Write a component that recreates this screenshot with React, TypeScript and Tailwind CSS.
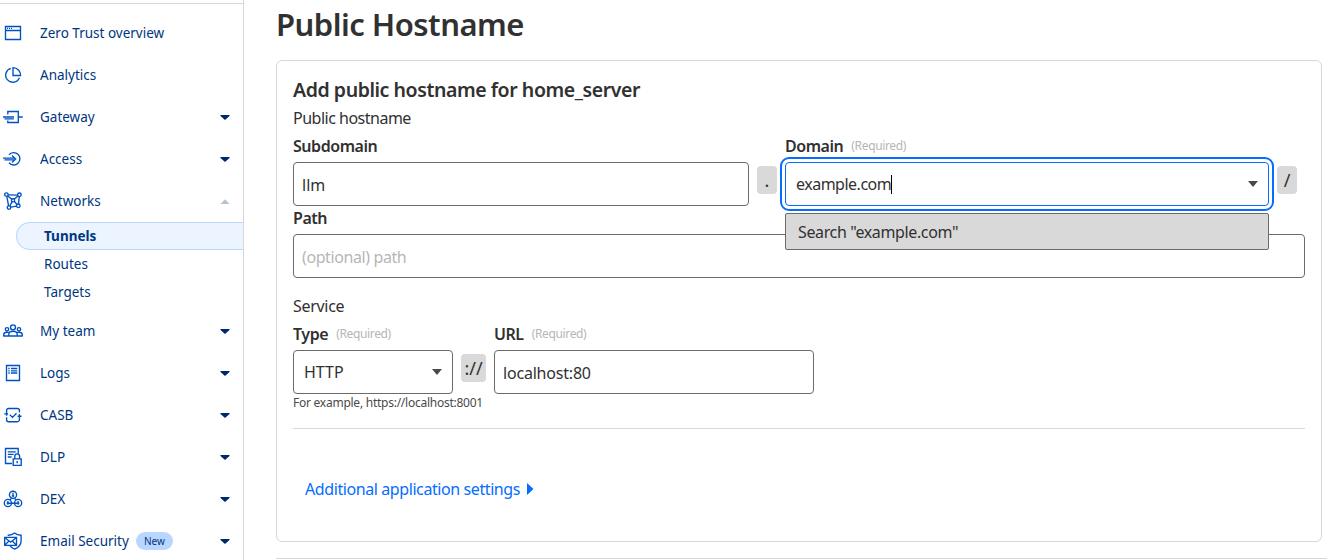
import type { ReactNode } from "react";

function Icon({ children }: { children: ReactNode }) {
  return (
    <svg className="h-5 w-5 shrink-0" viewBox="0 0 20 20" fill="none" stroke="#0051c3" strokeWidth="1.35">
      {children}
    </svg>
  );
}

const icons: Record<string, ReactNode> = {
  overview: (
    <Icon>
      <path d="M2.5 3.5h15v13h-15zM2.5 7.5h15" />
      <path d="M4 5.4h1M6 5.4h1M8 5.4h1" />
    </Icon>
  ),
  analytics: (
    <Icon>
      <path d="M7.8 3.3a7.1 7.1 0 1 0 8.6 9.4" />
      <path d="M10 2.6v7.9h7.6a7.6 7.6 0 0 0-7.6-7.9z" />
    </Icon>
  ),
  gateway: (
    <Icon>
      <path d="M4.8 7.4V4.5h10.5v11H4.8v-2M15.3 10h4.4M0 10h11M1.5 11.8h9.3" />
    </Icon>
  ),
  access: (
    <Icon>
      <path d="M6 5.8a6.2 6.2 0 1 1 0 8M0 9.1h12M1.5 10.9h10.2M9 6.6l3.6 3.4L9 13.4" />
    </Icon>
  ),
  networks: (
    <Icon>
      <circle cx="3.4" cy="3.6" r="1.8" />
      <circle cx="16.4" cy="3.8" r="1.8" />
      <circle cx="6" cy="16.6" r="1.8" />
      <circle cx="15.3" cy="14.8" r="1.8" />
      <circle cx="10" cy="9.3" r="1.6" />
      <path d="M5.2 3.8l9.4.3M3.8 5.4l1.8 9.4M7.8 16.2l5.7-1M16.2 5.6l-.7 7.4M4.8 4.9l4 3.4M15 5.1l-3.8 3.2M9.2 10.7l-2.4 4.2M11.2 10.3l2.8 3.2" />
    </Icon>
  ),
  team: (
    <Icon>
      <circle cx="10" cy="6.3" r="2.5" />
      <circle cx="4" cy="8.3" r="1.7" />
      <circle cx="16" cy="8.3" r="1.7" />
      <path d="M5.8 15v-1.8c0-1.8 1.6-3 4.2-3s4.2 1.2 4.2 3V15M.7 15v-1.4C.7 12 2 11.2 4 11.2l1.6.2M19.3 15v-1.4c0-1.6-1.3-2.4-3.3-2.4l-1.6.2M.2 15h19.6" />
    </Icon>
  ),
  logs: (
    <Icon>
      <path d="M3.5 2.5h13v15h-13zM5.3 5.5h1.4M5.3 7.8h1.4M5.3 10h1.4M8 5.5h6.3M8 7.8h6.3M8 10h6.3" />
    </Icon>
  ),
  casb: (
    <Icon>
      <path d="M3.6 7.8V5.5a2 2 0 0 1 2-2h8.8a2 2 0 0 1 2 2v2M16.4 11v3.7a2 2 0 0 1-2 2H5.6a2 2 0 0 1-2-2v-2.4M3.6 7.4v3.3M1.2 8.8h3.9M16.4 9v4M14.6 11.2h4M6.8 9.8l2.7 2.6 4-4.2" />
    </Icon>
  ),
  dlp: (
    <Icon>
      <path d="M9 16.5H2.5v-15h12.7v5.3M4.8 4.8h8M4.8 7.4h5.8M4.8 10h3.8" />
      <path d="M10.2 11.8h8v6.6h-8zM11.8 11.6V9.3a2.4 2.4 0 0 1 4.8 0v2.3M14.2 14v2.3" />
    </Icon>
  ),
  dex: (
    <Icon>
      <circle cx="10" cy="5.8" r="3.6" />
      <circle cx="4.9" cy="14" r="3.6" />
      <circle cx="15.1" cy="14" r="3.6" />
      <path d="M10 3.8v4.4M8.8 6.8h2.4M8.5 9.1l-1.5 2M11.5 9.1l1.5 2M4.9 12v3.8M15.1 12v3.8M3.7 14.2h12.6" />
    </Icon>
  ),
  email: (
    <Icon>
      <path d="M5.3 5V4.2c2.7 0 4.5-.8 6.2-2.2 1.7 1.4 3.8 2.2 6.6 2.2v5.6c0 4-2.5 6.7-6.4 8.3-2-.8-3.6-1.9-4.7-3.3" />
      <path d="M1.7 6.3h11.8v8H1.7zM1.7 6.5l5.9 4.7 5.9-4.7M1.9 14.1l4-4.1M13.3 14.1l-4-4.1" />
    </Icon>
  ),
};

function Caret({ up = false }: { up?: boolean }) {
  return (
    <svg className="h-[5px] w-[10px] shrink-0" viewBox="0 0 10 5" fill={up ? "#b6c2d6" : "#00276b"}>
      {up ? <path d="M.5 5h9L5 .3z" /> : <path d="M.5 0h9v.9L5 5 .5.9z" />}
    </svg>
  );
}

type Item = { icon: string; label: string; caret?: "up" | "down"; tag?: string };

const firstItems: Item[] = [
  { icon: "overview", label: "Zero Trust overview" },
  { icon: "analytics", label: "Analytics" },
  { icon: "gateway", label: "Gateway", caret: "down" },
  { icon: "access", label: "Access", caret: "down" },
  { icon: "networks", label: "Networks", caret: "up" },
];

const lastItems: Item[] = [
  { icon: "team", label: "My team", caret: "down" },
  { icon: "logs", label: "Logs", caret: "down" },
  { icon: "casb", label: "CASB", caret: "down" },
  { icon: "dlp", label: "DLP", caret: "down" },
  { icon: "dex", label: "DEX", caret: "down" },
  { icon: "email", label: "Email Security", caret: "down", tag: "New" },
];

function NavItem({ item }: { item: Item }) {
  return (
    <div className="flex h-[42px] shrink-0 items-center pr-[13px] pl-[3px]">
      {icons[item.icon]}
      <span className="ml-[17px]">{item.label}</span>
      {item.tag && (
        <span className="ml-[7px] flex h-[18px] w-[37px] items-center justify-center rounded-full bg-[#b9d6ff] text-[10px]">
          {item.tag}
        </span>
      )}
      <span className="flex-1" />
      {item.caret && <Caret up={item.caret === "up"} />}
    </div>
  );
}

function Label({ children, required = false }: { children: ReactNode; required?: boolean }) {
  return (
    <div className="mb-1 flex h-6 items-center gap-2">
      <span className="font-semibold tracking-[-0.45px]">{children}</span>
      {required && <span className="text-xs tracking-[-0.35px] text-[#b6b6b6]">(Required)</span>}
    </div>
  );
}

function Chip({ children, wide = false }: { children: ReactNode; wide?: boolean }) {
  return (
    <span
      className={`mx-2 mt-8 flex h-7 shrink-0 items-center justify-center rounded bg-[#d9d9d9] text-lg ${wide ? "w-[25px]" : "w-5"}`}
    >
      {children}
    </span>
  );
}

function SelectArrow() {
  return (
    <svg className="h-[6px] w-[10px]" viewBox="0 0 10 6" fill="#4a4a4a">
      <path d="M0 0h10L5 6z" />
    </svg>
  );
}

export default function App() {
  return (
    <div className="flex h-[560px] w-[1327px] overflow-hidden bg-white font-['Noto_Sans',sans-serif] text-base text-[#313131]">
      <nav className="flex w-[244px] shrink-0 flex-col border-r border-[#d5d7d8] pt-[3px] text-[13.5px] text-[#003681]">
        <div className="mb-2 h-px shrink-0 bg-[#d5d7d8]" />
        {firstItems.map((i) => (
          <NavItem key={i.label} item={i} />
        ))}
        <div className="mb-1 ml-4 shrink-0">
          <div className="flex h-7 items-center rounded-l-full border border-r-0 border-[#b9d6ff] bg-[#ebf4ff] pl-[27px] font-bold">
            Tunnels
          </div>
          <div className="flex h-7 items-center pl-7">Routes</div>
          <div className="flex h-7 items-center pl-7">Targets</div>
        </div>
        {lastItems.map((i) => (
          <NavItem key={i.label} item={i} />
        ))}
      </nav>

      <main className="flex flex-1 flex-col pr-[5px] pl-8">
        <h1 className="flex h-[60px] shrink-0 items-center pb-[11px] text-[31px] font-semibold tracking-[-0.52px]">
          Public Hostname
        </h1>
        <section className="h-[482px] shrink-0 rounded-md border border-[#d5d7d8] px-4 pt-4">
          <h2 className="flex h-[27px] items-center pb-px text-[19.5px] font-semibold tracking-[-0.43px]">
            Add public hostname for home_server
          </h2>
          <p className="mt-0.5 h-6 leading-6 tracking-[-0.5px]">Public hostname</p>
          <div className="mt-1 flex">
            <div className="w-[456px]">
              <Label>Subdomain</Label>
              <div className="flex h-11 items-center rounded border border-[#6b6b6b] px-2 pt-0.5">llm</div>
            </div>
            <Chip>.</Chip>
            <div className="relative w-[484px]">
              <Label required>Domain</Label>
              <div className="flex h-11 items-center rounded border border-[#056dff] px-[10px] outline-2 outline-offset-[3px] outline-[#056dff]">
                <span className="tracking-[-0.5px]">example.com</span>
                <span className="h-[19px] w-px bg-black" />
                <span className="flex-1" />
                <SelectArrow />
              </div>
              <div className="absolute top-[79px] left-0 z-10 flex h-[37px] w-full items-center rounded-[2px] border border-[#6b6b6b] bg-[#d9d9d9] pl-3 tracking-[-0.37px]">
                Search "example.com"
              </div>
            </div>
            <Chip>/</Chip>
          </div>
          <Label>Path</Label>
          <div className="flex h-11 items-center rounded border border-[#6b6b6b] px-2 pt-0.5 tracking-[-0.4px] text-[#b6b6b6]">
            (optional) path
          </div>
          <p className="mt-4 mb-1 h-6 leading-6 tracking-[-0.3px]">Service</p>
          <div className="flex">
            <div className="w-40">
              <Label required>Type</Label>
              <div className="flex h-11 items-center justify-between rounded border border-[#6b6b6b] px-[10px]">
                <span>HTTP</span>
                <SelectArrow />
              </div>
            </div>
            <Chip wide>://</Chip>
            <div className="w-80">
              <Label required>URL</Label>
              <div className="flex h-11 items-center rounded border border-[#6b6b6b] px-2 pt-0.5 tracking-[-0.2px]">
                localhost:80
              </div>
            </div>
          </div>
          <p className="h-[18px] text-xs leading-[18px] tracking-[-0.25px] text-[#4a4a4a]">
            For example, https://localhost:8001
          </p>
          <hr className="mt-4 border-[#d9d9d9]" />
          <div className="mt-12 ml-3 flex h-6 items-center gap-[7px] text-[#056dff]">
            <span className="tracking-[-0.41px]">Additional application settings</span>
            <svg className="h-3 w-[7px]" viewBox="0 0 7 12" fill="#056dff">
              <path d="M0 0v12l6.5-6z" />
            </svg>
          </div>
        </section>
        <div className="mt-4 -mr-[5px] h-px shrink-0 bg-[#d5d7d8]" />
      </main>
    </div>
  );
}
